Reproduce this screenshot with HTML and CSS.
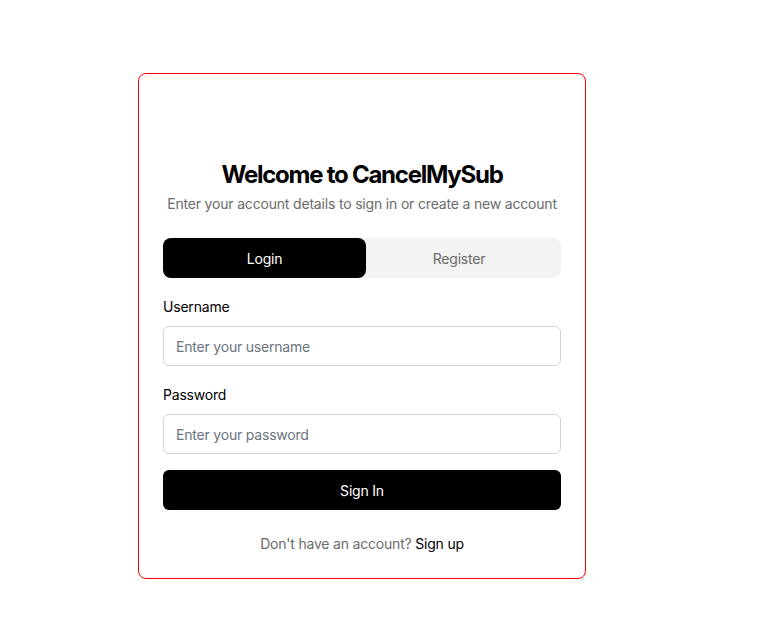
FILE: index.html
```html
<!DOCTYPE html>
<html lang="en">
<head>
<meta charset="utf-8">
<title>CancelMySub</title>
<link rel="stylesheet" href="styles.css">
</head>
<body>
<main class="page">
  <section class="card">
    <header class="card-header">
      <h1 class="title">Welcome to CancelMySub</h1>
      <p class="subtitle">Enter your account details to sign in or create a new account</p>
    </header>
    <div class="tabs">
      <button class="tab tab-active" type="button">Login</button>
      <button class="tab tab-register" type="button">Register</button>
    </div>
    <form class="form">
      <div class="field">
        <label class="label" for="username">Username</label>
        <input class="input" id="username" type="text" placeholder="Enter your username">
      </div>
      <div class="field">
        <label class="label" for="password">Password</label>
        <input class="input" id="password" type="password" placeholder="Enter your password">
      </div>
      <button class="submit" type="button">Sign In</button>
    </form>
    <p class="footer">Don't have an account? <a class="link" href="#">Sign up</a></p>
  </section>
</main>
</body>
</html>
```

FILE: styles.css
```css
* { box-sizing: border-box; }
html, body { margin: 0; padding: 0; background: #fff; }
body {
  font-family: Inter, "Liberation Sans", sans-serif;
  color: #000;
  letter-spacing: -0.2px;
  -webkit-font-smoothing: antialiased;
}
.page {
  padding: 73px 0 0 138px;
}
.card {
  width: 448px;
  border: 1px solid #ff0000;
  border-radius: 8px;
  padding: 85px 24px 24px;
  background: #fff;
}
.card-header {
  text-align: center;
}
.title {
  margin: 0;
  font-size: 24px;
  line-height: 32px;
  font-weight: 700;
  letter-spacing: -1.25px;
}
.subtitle {
  margin: 3px 0 0;
  font-size: 14px;
  line-height: 20px;
  color: #6b6b6b;
  white-space: nowrap;
  letter-spacing: -0.18px;
}
.tabs {
  margin-top: 24px;
  display: grid;
  grid-template-columns: 203px 1fr;
  background: #f3f3f3;
  border-radius: 8px;
  height: 40px;
}
.tab {
  border: 0;
  background: transparent;
  font-family: inherit;
  font-size: 14px;
  letter-spacing: -0.2px;
  color: #6b6b6b;
  border-radius: 8px;
  padding: 0;
  cursor: pointer;
}
.tab-register { padding-right: 9px; }
.tab-active {
  background: #000;
  color: #fff;
}
.form {
  margin-top: 19px;
  display: flex;
  flex-direction: column;
}
.field {
  display: flex;
  flex-direction: column;
  gap: 9px;
  margin-bottom: 19px;
}
.field + .field { margin-bottom: 16px; }
.label {
  font-size: 14px;
  line-height: 20px;
  font-weight: 400;
  color: #000;
}
.input {
  height: 40px;
  border: 1px solid #cfd3da;
  border-radius: 6px;
  padding: 0 12px;
  font-family: inherit;
  font-size: 14px;
  letter-spacing: -0.2px;
  color: #000;
  background: #fff;
}
.input::placeholder { color: #6b7280; }
.submit {
  height: 40px;
  border: 0;
  border-radius: 6px;
  background: #000;
  color: #fff;
  font-family: inherit;
  font-size: 14px;
  letter-spacing: -0.2px;
  font-weight: 400;
  cursor: pointer;
}
.footer {
  margin: 24px 0 0;
  text-align: center;
  font-size: 14px;
  line-height: 20px;
  color: #6b6b6b;
}
.link {
  color: #000;
  text-decoration: none;
}
```
